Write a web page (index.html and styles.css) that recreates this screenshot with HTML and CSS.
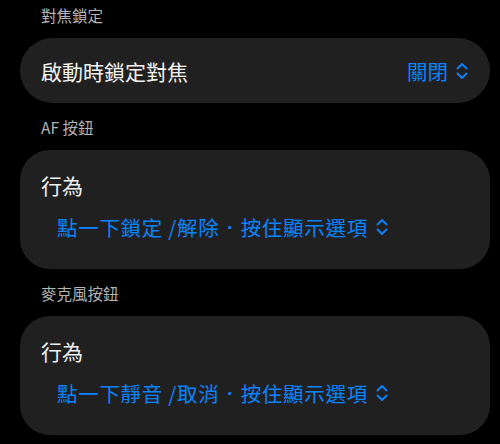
FILE: index.html
```html
<!DOCTYPE html>
<html lang="zh-Hant">
<head>
    <meta charset="UTF-8">
    <meta name="viewport" content="width=device-width, initial-scale=1.0">
    <title>相機設定</title>
    <link rel="stylesheet" href="styles.css">
</head>
<body>
    <div class="settings">
        <!-- 對焦鎖定 -->
        <div class="section-label">對焦鎖定</div>
        <div class="card card-row">
            <span class="row-title">啟動時鎖定對焦</span>
            <span class="picker">關閉
                <svg class="chevrons" viewBox="0 0 12 18" width="12" height="18">
                    <path d="M1.5 6.5 L6 2 L10.5 6.5 M1.5 11.5 L6 16 L10.5 11.5" />
                </svg>
            </span>
        </div>

        <!-- AF 按鈕 -->
        <div class="section-label">AF 按鈕</div>
        <div class="card card-stack">
            <div class="row-title">行為</div>
            <div class="picker picker-line">點一下鎖定 /解除．按住顯示選項
                <svg class="chevrons" viewBox="0 0 12 18" width="12" height="18">
                    <path d="M1.5 6.5 L6 2 L10.5 6.5 M1.5 11.5 L6 16 L10.5 11.5" />
                </svg>
            </div>
        </div>

        <!-- 麥克風按鈕 -->
        <div class="section-label">麥克風按鈕</div>
        <div class="card card-stack">
            <div class="row-title">行為</div>
            <div class="picker picker-line">點一下靜音 /取消．按住顯示選項
                <svg class="chevrons" viewBox="0 0 12 18" width="12" height="18">
                    <path d="M1.5 6.5 L6 2 L10.5 6.5 M1.5 11.5 L6 16 L10.5 11.5" />
                </svg>
            </div>
        </div>
    </div>
</body>
</html>
```

FILE: styles.css
```css
body {
    margin: 0;
    background-color: #000;
    color: #f2f2f2;
    font-family: "Noto Sans CJK TC", "Noto Sans", sans-serif;
}
.settings {
    padding: 4px 10px 0 20px;
}
.section-label {
    font-size: 15.5px;
    line-height: 22px;
    color: #b4b4b4;
    margin: 0 0 12px 21px;
}
.card {
    background-color: #202020;
    margin-bottom: 13px;
}
.card-row {
    height: 65px;
    border-radius: 33px;
    display: flex;
    align-items: center;
    justify-content: space-between;
    padding: 0 22px 0 21px;
}
.card-stack {
    border-radius: 30px;
    padding: 24px 21px 31px 21px;
    height: 64px;
}
.row-title {
    font-size: 21px;
    line-height: 22px;
}
.picker {
    color: #0a84ff;
    font-size: 20.5px;
    line-height: 22px;
    display: flex;
    align-items: center;
    gap: 8px;
}
.picker-line {
    margin: 20px 0 0 16px;
    letter-spacing: 0.7px;
}
.chevrons {
    fill: none;
    stroke: #0a84ff;
    stroke-width: 1.8;
    stroke-linecap: round;
    stroke-linejoin: round;
}
```
